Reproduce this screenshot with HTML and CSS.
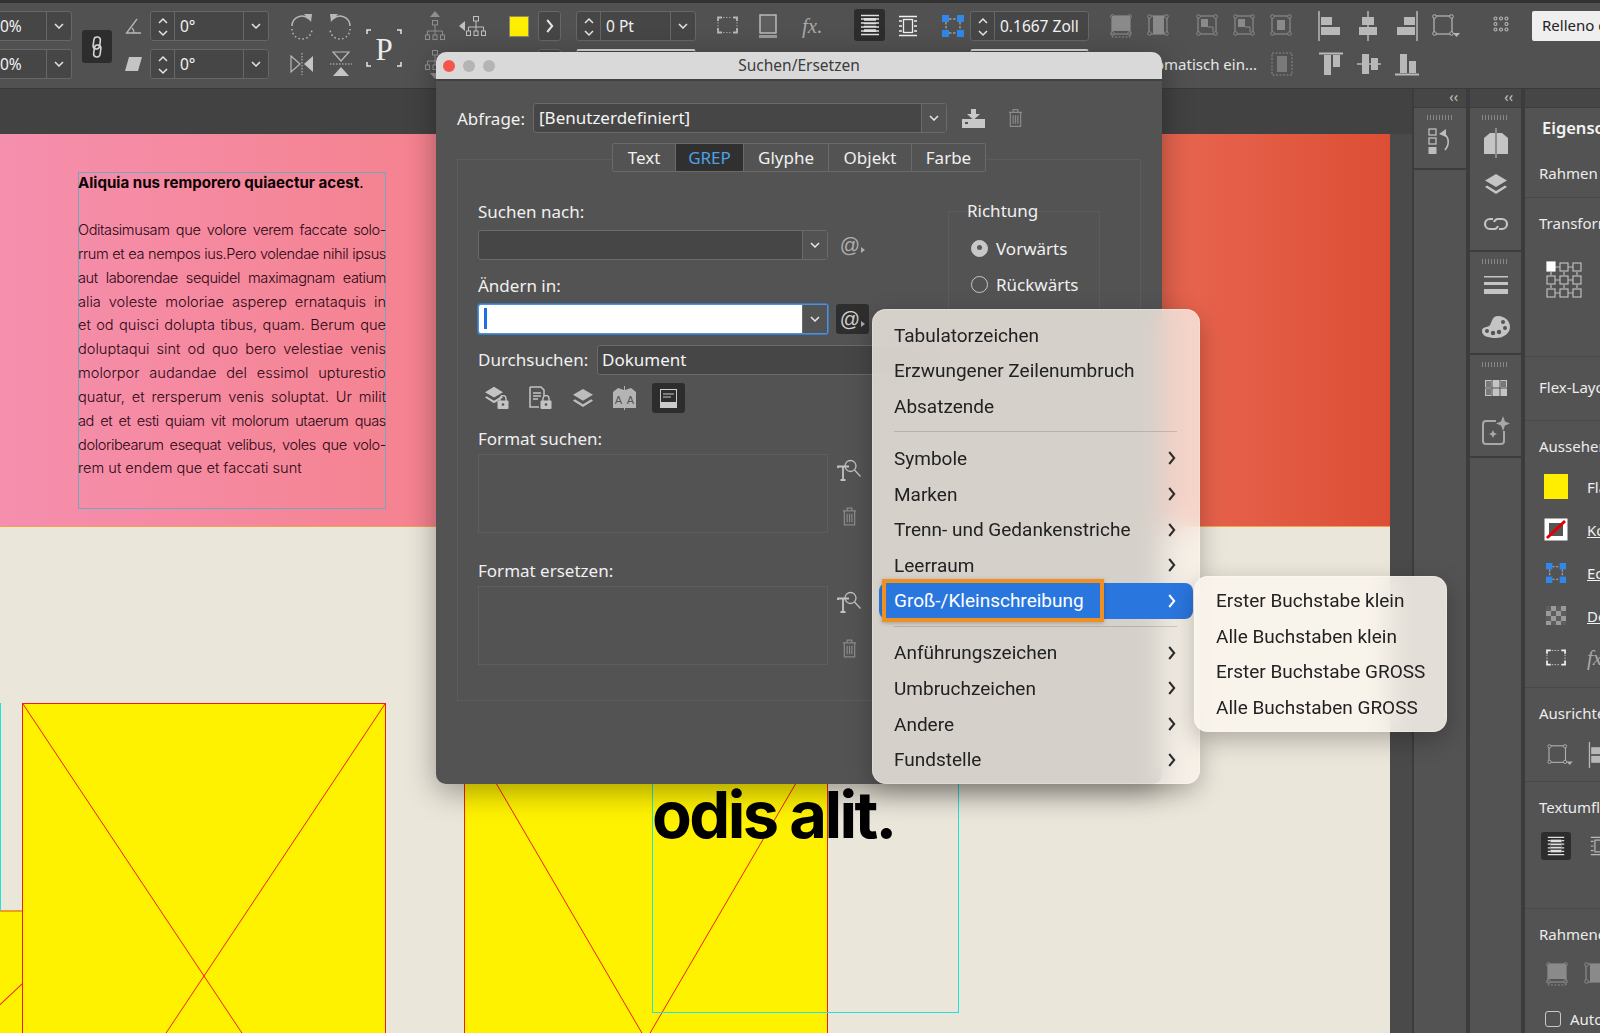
FILE: index.html
```html
<!DOCTYPE html>
<html lang="de">
<head>
    <meta charset="UTF-8">
    <title>Suchen/Ersetzen</title>
    <link rel="stylesheet" href="styles.css">
</head>
<body>
<svg class="sprite" width="0" height="0">
    <symbol id="i-chev" viewBox="0 0 10 6"><path d="M1 1l4 4 4-4" fill="none" stroke="currentColor" stroke-width="1.5"/></symbol>
    <symbol id="i-step" viewBox="0 0 12 30"><path d="M2 11l4-4 4 4M2 19l4 4 4-4" fill="none" stroke="currentColor" stroke-width="1.5"/></symbol>
    <symbol id="i-more" viewBox="0 0 8 14"><path d="M1.2 1l5 6-5 6" fill="none" stroke="currentColor" stroke-width="2"/></symbol>
    <symbol id="i-trash" viewBox="0 0 16 21"><path d="M1 4.5h14M5.5 4.5V1.5h5v3M2.5 4.5v15h11v-15M5.5 7.5v9M8 7.5v9M10.5 7.5v9" fill="none" stroke="currentColor" stroke-width="1.3"/></symbol>
    <symbol id="i-tsearch" viewBox="0 0 24 22"><path d="M1 9V7.500h11M6 8v13M3.500 21h5" fill="none" stroke="currentColor" stroke-width="1.800"/><circle cx="13.500" cy="7" r="5.500" fill="none" stroke="currentColor" stroke-width="1.300"/><path d="M17.500 11l6 6.500" stroke="currentColor" stroke-width="1.300"/></symbol>
    <symbol id="i-layers" viewBox="0 0 24 22"><path d="M12 1l11 6.500-11 6.500L1 7.500z" fill="currentColor"/><path d="M3 12.500l9 5.500 9-5.500 2 1.500-11 7-11-7z" fill="currentColor"/></symbol>
    <symbol id="i-lock" viewBox="0 0 12 14"><rect x="0.500" y="5.500" width="11" height="8.500" rx="1" fill="currentColor"/><path d="M3 6V3.500a3 3 0 0 1 6 0V6" fill="none" stroke="currentColor" stroke-width="1.400"/><circle cx="6" cy="9.500" r="1.300" fill="#535353"/></symbol>
    <symbol id="i-rot" viewBox="0 0 24 30"><path d="M2 15a10 10 0 0 1 17-7" fill="none" stroke="currentColor" stroke-width="1.500"/><path d="M14 3l8 0-1 8z" fill="currentColor"/><path d="M2 18a10 10 0 0 0 20 0" fill="none" stroke="currentColor" stroke-width="1.500" stroke-dasharray="1.500 2.500"/></symbol>
    <symbol id="i-tree" viewBox="0 0 22 22"><path d="M11 6v5M3.500 16v-4h15v4M11 11v5" fill="none" stroke="currentColor" stroke-width="1"/><rect x="8.500" y="1.500" width="5" height="4.500" fill="none" stroke="currentColor"/><rect x="1.500" y="16" width="4" height="4.500" fill="none" stroke="currentColor"/><rect x="9" y="16" width="4" height="4.500" fill="none" stroke="currentColor"/><rect x="16.500" y="16" width="4" height="4.500" fill="none" stroke="currentColor"/></symbol>
    <symbol id="i-wrap" viewBox="0 0 20 22"><path d="M1 1.500h18M1 20.500h18M1 5h3M16 5h3M1 9h3M16 9h3M1 13h3M16 13h3M1 17h3M16 17h3" stroke="currentColor" stroke-width="1.300"/><rect x="4" y="4" width="12" height="14" fill="currentColor"/><path d="M4 7.500h12M4 11h12M4 14.500h12" stroke="#2c2c2c" stroke-width="1.500"/></symbol>
    <symbol id="i-wrap2" viewBox="0 0 20 22"><path d="M1 1.500h18M1 20.500h18M1 6h3M16 6h3M1 11h3M16 11h3M1 16h3M16 16h3" stroke="currentColor" stroke-width="1.300"/><rect x="5.500" y="4.500" width="9" height="13" fill="none" stroke="currentColor" stroke-width="1.300"/></symbol>
    <symbol id="i-gap" viewBox="0 0 22 22"><path d="M7 4h8M7 18h8M4 7v8M18 7v8" stroke="#9a9a9a" stroke-width="1.500" stroke-dasharray="2.500 1.500"/><g fill="#2f88ea"><rect x="0" y="0" width="7" height="7"/><rect x="15" y="0" width="7" height="7"/><rect x="0" y="15" width="7" height="7"/><rect x="15" y="15" width="7" height="7"/></g></symbol>
    <symbol id="i-frame" viewBox="0 0 22 22"><rect x="2" y="2" width="18" height="18" fill="none" stroke="currentColor" stroke-width="1.200"/><g fill="#535353" stroke="currentColor"><circle cx="2.500" cy="2.500" r="1.800"/><circle cx="19.500" cy="2.500" r="1.800"/><circle cx="2.500" cy="19.500" r="1.800"/><circle cx="19.500" cy="19.500" r="1.800"/></g></symbol>
    <symbol id="i-corners" viewBox="0 0 22 20"><path d="M1 5V1.500h4M16 1.500h4V5M1 12v4.500h4M16 16.500h4V12" fill="none" stroke="currentColor" stroke-width="1.800"/><path d="M6 1.500h9M6 16.500h9M1 6v5M20 6v5" stroke="currentColor" stroke-dasharray="1.500 1.500" stroke-width=".8"/></symbol>
    <symbol id="i-fit-a" viewBox="0 0 22 24"><use href="#i-frame" width="22" height="22"/><rect x="2" y="2" width="18" height="15" fill="currentColor"/><path d="M2 19v4h18v-4" fill="none" stroke="currentColor" stroke-dasharray="2 1.500"/></symbol>
    <symbol id="i-fit-b" viewBox="0 0 22 24"><use href="#i-frame" width="22" height="22"/><rect x="6" y="2" width="11" height="18" fill="currentColor"/></symbol>
    <symbol id="i-fit-c" viewBox="0 0 22 24"><use href="#i-frame" width="22" height="22"/><rect x="5" y="5" width="7" height="8" fill="currentColor"/><path d="M12 13h5v5" fill="none" stroke="currentColor"/></symbol>
    <symbol id="i-fit-d" viewBox="0 0 22 24"><use href="#i-frame" width="22" height="22"/><rect x="7" y="6" width="8" height="10" fill="currentColor"/></symbol>
    <symbol id="i-al-l" viewBox="0 0 24 30"><path d="M1 0v30" stroke="currentColor" stroke-width="1.500"/><rect x="3" y="6" width="11" height="8" fill="currentColor"/><rect x="3" y="16" width="19" height="8" fill="currentColor"/></symbol>
    <symbol id="i-al-c" viewBox="0 0 24 30"><path d="M12 0v30" stroke="currentColor" stroke-width="1.500"/><rect x="6" y="6" width="12" height="8" fill="currentColor"/><rect x="3" y="16" width="18" height="8" fill="currentColor"/></symbol>
    <symbol id="i-al-r" viewBox="0 0 24 30"><path d="M23 0v30" stroke="currentColor" stroke-width="1.500"/><rect x="10" y="6" width="11" height="8" fill="currentColor"/><rect x="3" y="16" width="18" height="8" fill="currentColor"/></symbol>
    <symbol id="i-al-t" viewBox="0 0 26 24"><path d="M1 1.500h24" stroke="currentColor" stroke-width="2"/><rect x="6" y="3" width="7" height="20" fill="currentColor"/><rect x="15" y="3" width="7" height="12" fill="currentColor"/></symbol>
    <symbol id="i-al-m" viewBox="0 0 26 24"><path d="M1 12h24" stroke="currentColor" stroke-width="1.500"/><rect x="6" y="2" width="7" height="20" fill="currentColor"/><rect x="15" y="6" width="7" height="12" fill="currentColor"/></symbol>
    <symbol id="i-al-b" viewBox="0 0 26 24"><path d="M1 22.500h24" stroke="currentColor" stroke-width="2"/><rect x="6" y="2" width="7" height="19" fill="currentColor"/><rect x="15" y="9" width="7" height="12" fill="currentColor"/></symbol>
</svg>

<header class="toolbar">
    <div class="tb-group g-zoom">
        <div class="num num-cut"><span class="num-val">0%</span><span class="num-chev"><svg width="10" height="6"><use href="#i-chev"/></svg></span></div>
        <div class="num num-cut"><span class="num-val">0%</span><span class="num-chev"><svg width="10" height="6"><use href="#i-chev"/></svg></span></div>
    </div>
    <div class="tb-group g-link">
        <div class="icon-btn link-btn"><svg width="14" height="24" viewBox="0 0 14 24" fill="none" stroke="#d4d4d4" stroke-width="1.600"><rect x="3.500" y="2" width="6.500" height="12" rx="3.200" transform="rotate(8 7 8)"/><rect x="4" y="10" width="6.500" height="12" rx="3.200" transform="rotate(8 7 16)"/></svg></div>
    </div>
    <div class="tb-group g-angle">
        <div class="tb-ico"><svg width="17" height="18" viewBox="0 0 17 18" fill="none" stroke="#b8b8b8" stroke-width="1.300"><path d="M16 16H1.500L12 2M9 16a7 7 0 0 0-2-5"/></svg></div>
        <div class="tb-ico"><svg width="17" height="14" viewBox="0 0 17 14"><path d="M4 0h13l-4 14H0z" fill="#c4c4c4"/></svg></div>
    </div>
    <div class="tb-group g-num">
        <div class="num"><span class="num-step"><svg width="12" height="30"><use href="#i-step"/></svg></span><span class="num-val">0°</span><span class="num-chev"><svg width="10" height="6"><use href="#i-chev"/></svg></span></div>
        <div class="num"><span class="num-step"><svg width="12" height="30"><use href="#i-step"/></svg></span><span class="num-val">0°</span><span class="num-chev"><svg width="10" height="6"><use href="#i-chev"/></svg></span></div>
    </div>
    <div class="tb-group g-rotate">
        <div class="tb-row">
            <svg width="24" height="30"><use href="#i-rot"/></svg>
            <svg class="flip-x" width="24" height="30"><use href="#i-rot"/></svg>
        </div>
        <div class="tb-row">
            <svg width="24" height="22" viewBox="0 0 24 22"><path d="M1 3l9 8-9 8z" fill="none" stroke="#b8b8b8" stroke-width="1.200"/><path d="M23 3l-9 8 9 8z" fill="#c4c4c4"/><path d="M12 0v22" stroke="#c4c4c4" stroke-dasharray="1.500 1.500"/></svg>
            <svg width="22" height="26" viewBox="0 0 22 26"><path d="M3 1h16l-8 9z" fill="none" stroke="#b8b8b8" stroke-width="1.200"/><path d="M3 25h16l-8-9z" fill="#c4c4c4"/><path d="M0 13h22" stroke="#c4c4c4" stroke-dasharray="1.500 1.500"/></svg>
        </div>
    </div>
    <div class="tb-group g-p">
        <svg width="36" height="38" viewBox="0 0 36 38">
            <path d="M1 5V1h4M31 1h4v4M1 33v4h4M31 37h4v-4" fill="none" stroke="#e4e4e4" stroke-width="1.500"/>
            <text class="p-glyph" x="18" y="31" text-anchor="middle">P</text>
        </svg>
    </div>
    <div class="tb-group g-tree">
        <div class="tb-row">
            <svg width="22" height="30" viewBox="0 0 22 30"><path d="M11 0l5 6H6z" fill="#8f8f8f"/><use href="#i-tree" y="8" width="22" height="22" color="#8f8f8f"/></svg>
            <svg width="28" height="22" viewBox="0 0 28 22"><path d="M0 11l6-5v10z" fill="#c0c0c0"/><use href="#i-tree" x="6" width="22" height="22" color="#c0c0c0"/></svg>
        </div>
        <div class="tb-row">
            <svg width="22" height="30" viewBox="0 0 22 30"><use href="#i-tree" width="22" height="22" color="#8f8f8f"/><path d="M11 30l5-6H6z" fill="#8f8f8f"/></svg>
        </div>
    </div>
    <div class="tb-group g-swatch">
        <div class="tb-ico"><span class="swatch"></span></div>
    </div>
    <div class="tb-group g-arrow">
        <div class="arrow-btn"><svg width="8" height="14"><use href="#i-more"/></svg></div>
        <div class="arrow-btn"></div>
    </div>
    <div class="tb-group g-stroke">
        <div class="num"><span class="num-step"><svg width="12" height="30"><use href="#i-step"/></svg></span><span class="num-val">0 Pt</span><span class="num-chev"><svg width="10" height="6"><use href="#i-chev"/></svg></span></div>
        <div class="num num-light"></div>
    </div>
    <div class="tb-group g-strokeico">
        <div class="tb-row">
            <svg width="22" height="20"><use href="#i-corners"/></svg>
            <svg width="18" height="24" viewBox="0 0 18 24"><rect x="1" y="1" width="16" height="18" fill="#5e5e5e" stroke="#c0c0c0" stroke-width="1.400"/><rect x="0" y="21" width="18" height="3" fill="#9a9a9a"/></svg>
        </div>
    </div>
    <div class="tb-group g-fx">
        <div class="tb-row"><span class="fx">fx.</span></div>
    </div>
    <div class="tb-group g-wrapbtn">
        <div class="icon-btn wrap-btn"><svg width="20" height="22"><use href="#i-wrap"/></svg></div>
    </div>
    <div class="tb-group g-wrap2">
        <div class="tb-ico"><svg width="20" height="22"><use href="#i-wrap2"/></svg></div>
    </div>
    <div class="tb-group g-gap">
        <div class="tb-ico"><svg width="22" height="22"><use href="#i-gap"/></svg></div>
    </div>
    <div class="tb-group g-gapnum">
        <div class="num"><span class="num-step"><svg width="12" height="30"><use href="#i-step"/></svg></span><span class="num-val">0.1667 Zoll</span></div>
        <div class="num num-light"></div>
    </div>
    <div class="tb-group g-fit">
        <div class="tb-row dim">
            <svg width="22" height="24"><use href="#i-fit-a"/></svg>
            <svg class="push-1" width="22" height="24"><use href="#i-fit-b"/></svg>
            <svg class="push-2" width="22" height="24"><use href="#i-fit-c"/></svg>
            <svg class="push-3" width="22" height="24"><use href="#i-fit-c"/></svg>
            <svg class="push-3" width="22" height="24"><use href="#i-fit-d"/></svg>
        </div>
        <div class="tb-row row-end">
            <span class="tb-text">Automatisch ein...</span>
            <svg class="dim push-4" width="22" height="24" viewBox="0 0 22 24"><rect x="1" y="1" width="20" height="22" fill="none" stroke="#8a8a8a" stroke-dasharray="2 1.500"/><rect x="6" y="4" width="10" height="16" fill="#7a7a7a"/></svg>
        </div>
    </div>
    <div class="tb-group g-align">
        <div class="tb-row">
            <svg width="24" height="30"><use href="#i-al-l"/></svg>
            <svg class="push-al" width="24" height="30"><use href="#i-al-c"/></svg>
            <svg class="push-al" width="24" height="30"><use href="#i-al-r"/></svg>
            <svg class="push-al" width="28" height="24" viewBox="0 0 28 24"><use href="#i-frame" width="22" height="22" color="#b8b8b8"/><path d="M21 19h7l-3.500 4z" fill="#b8b8b8"/></svg>
        </div>
        <div class="tb-row">
            <svg width="26" height="24"><use href="#i-al-t"/></svg>
            <svg class="push-al2" width="26" height="24"><use href="#i-al-m"/></svg>
            <svg class="push-al2" width="26" height="24"><use href="#i-al-b"/></svg>
        </div>
    </div>
    <div class="tb-group g-grid">
        <div class="tb-ico"><svg width="16" height="20" viewBox="0 0 16 20" fill="none" stroke="#b8b8b8" stroke-width="1.100"><circle cx="2.500" cy="2.500" r="1.500"/><circle cx="8" cy="2.500" r="1.500"/><circle cx="13.500" cy="2.500" r="1.500"/><circle cx="2.500" cy="8" r="1.500"/><circle cx="13.500" cy="8" r="1.500"/><circle cx="2.500" cy="13.500" r="1.500"/><circle cx="8" cy="13.500" r="1.500"/><circle cx="13.500" cy="13.500" r="1.500"/></svg></div>
    </div>
    <div class="tb-group g-relleno">
        <div class="style-box">Relleno de grafico</div>
    </div>
</header>

<div class="workspace">
    <main class="canvas">
        <div class="page">
            <section class="spread-top"></section>
            <section class="spread-bottom"></section>

            <div class="guide-left"></div>
            <div class="frame frame-back"><svg class="frame-x" viewBox="0 0 22 150" preserveAspectRatio="none"><path d="M22 72L0 94"/></svg></div>
            <div class="frame frame-one"><svg class="frame-x" viewBox="0 0 100 100" preserveAspectRatio="none"><path d="M0 0L100 100M100 0L0 100"/></svg></div>
            <div class="frame frame-two"><svg class="frame-x" viewBox="0 0 100 100" preserveAspectRatio="none"><path d="M0 0L100 100M100 0L0 100"/></svg></div>
            <div class="text-cyan"></div>
            <div class="headline">odis alit.</div>

            <div class="text-frame">
                <p class="lead"><b>Aliquia nus remporero quiaectur acest</b>.</p>
                <p class="copy">
                    <span class="tight">Oditasimusam que volore verem faccate solo-</span>
                    <span class="tight">rrum et ea nempos ius.Pero volendae nihil ipsus</span>
                    <span class="tight">aut laborendae sequidel maximagnam eatium</span>
                    <span>alia voleste moloriae asperep ernataquis in</span>
                    <span>et od quisci dolupta tibus, quam. Berum que</span>
                    <span>doluptaqui sint od quo bero velestiae venis</span>
                    <span>molorpor audandae del essimol upturestio</span>
                    <span>quatur, et rersperum venis soluptat. Ur milit</span>
                    <span class="tight">ad et et esti quiam vit molorum utaerum quas</span>
                    <span class="tight">doloribearum esequat velibus, voles que volo-</span>
                    <span class="last">rem ut endem que et faccati sunt</span>
                </p>
            </div>
        </div>
    </main>

    <aside class="dock dock-a">
        <div class="dock-head"><span>‹‹</span></div>
        <div class="dock-sec sec-history">
            <i class="grip"></i>
            <svg width="24" height="26" viewBox="0 0 24 26" color="#bdbdbd"><g fill="none" stroke="currentColor" stroke-width="1.300"><rect x="1" y="1" width="7" height="6"/><rect x="1" y="10" width="7" height="6"/></g><rect x="0.500" y="19" width="8" height="7" fill="currentColor"/><path d="M15 6c6 2 7 10 2 16" fill="none" stroke="currentColor" stroke-width="1.600"/><path d="M11 6l7-5 0 8z" fill="currentColor"/></svg>
        </div>
    </aside>

    <aside class="dock dock-b">
        <div class="dock-head"><span>‹‹</span></div>
        <div class="dock-sec sec-one">
            <i class="grip"></i>
            <svg width="26" height="30" viewBox="0 0 26 30" fill="#c4c4c4"><path d="M12 5H7L1 10v16h11zM14 5h5l6 5v16H14z"/><path d="M13 0v30" stroke="#c4c4c4" stroke-width="1"/></svg>
            <svg class="layers-ico" width="24" height="26" viewBox="0 0 24 22" color="#c4c4c4"><use href="#i-layers"/></svg>
            <svg class="chain-ico" width="26" height="14" viewBox="0 0 26 14" fill="none" stroke="#c4c4c4" stroke-width="2.200"><path d="M10 2H7a5 5 0 0 0 0 10h5a5 5 0 0 0 3-3"/><path d="M16 12h3a5 5 0 0 0 0-10h-5a5 5 0 0 0-3 3"/></svg>
        </div>
        <div class="dock-sec sec-two">
            <i class="grip"></i>
            <svg width="24" height="18" viewBox="0 0 24 18" fill="#c4c4c4"><rect y="0" width="24" height="1.500"/><rect y="6" width="24" height="3"/><rect y="13" width="24" height="5"/></svg>
            <svg class="palette-ico" width="28" height="22" viewBox="0 0 28 22"><path d="M16 0c7 0 12 5 12 11s-6 11-14 11S0 20 0 15s6-3 8-6 2-9 8-9z" fill="#c4c4c4"/><g fill="#535353"><circle cx="21" cy="6" r="2"/><circle cx="23" cy="12" r="2"/><circle cx="17" cy="16" r="2.200"/><circle cx="11" cy="17" r="2.200"/><circle cx="5" cy="15" r="2"/></g></svg>
        </div>
        <div class="dock-sec sec-three">
            <i class="grip"></i>
            <svg width="22" height="16" viewBox="0 0 22 16"><rect width="22" height="16" fill="#c4c4c4"/><path d="M7 0v16M15 0v16M0 8h22" stroke="#535353"/><rect x="1" y="1" width="5" height="6" fill="#777"/><rect x="1" y="9" width="5" height="6" fill="#777"/><rect x="16" y="1" width="5" height="6" fill="#777"/></svg>
            <svg class="fx-ico" width="28" height="30" viewBox="0 0 28 30"><path d="M14 6H4a3 3 0 0 0-3 3v17a3 3 0 0 0 3 3h15a3 3 0 0 0 3-3V16" fill="none" stroke="#a8a8a8" stroke-width="2"/><path d="M21 1l2 5.500 5 2-5 2-2 5.500-2-5.500-5-2 5-2zM11 15l1.300 2.700 2.700 1.300-2.700 1.300-1.300 2.700-1.300-2.700-2.700-1.300 2.700-1.300z" fill="#a8a8a8"/></svg>
        </div>
    </aside>

    <aside class="props">
        <div class="dock-head"></div>
        <section class="prop prop-main">
            <h2>Eigenschaften</h2>
            <div class="prop-title title-frame">Rahmen</div>
        </section>
        <section class="prop prop-transform">
            <div class="prop-title">Transformieren</div>
            <svg class="ref-grid" width="36" height="38" viewBox="0 0 36 38" fill="none" stroke="#bdbdbd" stroke-width="1.200">
                <path d="M9 6h5M22 6h5M9 19h5M22 19h5M9 32h5M22 32h5M5 11v3M18 11v3M31 11v3M5 24v3M18 24v3M31 24v3"/>
                <rect x="1" y="1" width="8" height="9" fill="#fff" stroke="#fff"/><rect x="14" y="2" width="8" height="8"/><rect x="27" y="2" width="8" height="8"/>
                <rect x="1" y="15" width="8" height="8"/><rect x="14" y="15" width="8" height="8"/><rect x="27" y="15" width="8" height="8"/>
                <rect x="1" y="28" width="8" height="8"/><rect x="14" y="28" width="8" height="8"/><rect x="27" y="28" width="8" height="8"/>
            </svg>
        </section>
        <section class="prop prop-flex"><div class="prop-title">Flex-Layout</div></section>
        <section class="prop prop-look">
            <div class="prop-title">Aussehen</div>
            <div class="look-row"><span class="look-ico"><span class="look-fill"></span></span><span class="look-text">Fläche</span></div>
            <div class="look-row"><span class="look-ico"><svg width="24" height="23" viewBox="0 0 24 23"><rect x="0.500" y="0.500" width="23" height="22" fill="#fff"/><rect x="5" y="5" width="14" height="13" fill="#555"/><path d="M3 20L21 3" stroke="#e00000" stroke-width="3"/></svg></span><span class="look-text ul">Kontur</span></div>
            <div class="look-row"><span class="look-ico"><svg width="20" height="20"><use href="#i-gap"/></svg></span><span class="look-text ul">Ecken</span></div>
            <div class="look-row"><span class="look-ico"><svg width="20" height="19" viewBox="0 0 20 19"><rect width="20" height="19" fill="#9a9a9a"/><path d="M0 0h5v5H0zM10 0h5v5h-5zM5 5h5v5H5zM15 5h5v5h-5zM0 10h5v5H0zM10 10h5v5h-5zM5 15h5v4H5zM15 15h5v4h-5z" fill="#5d5d5d"/></svg></span><span class="look-text ul">Deckkraft</span></div>
            <div class="look-row"><span class="look-ico corners-ico"><svg width="21" height="19"><use href="#i-corners"/></svg></span><span class="fx">fx</span></div>
        </section>
        <section class="prop prop-align">
            <div class="prop-title">Ausrichten</div>
            <div class="prop-icons">
                <svg width="28" height="22" viewBox="0 0 28 24"><use href="#i-frame" width="22" height="22" color="#b0b0b0"/><path d="M21 19h7l-3.500 4z" fill="#b0b0b0"/></svg>
                <svg class="align-first" width="22" height="26"><use href="#i-al-l" color="#b8b8b8"/></svg>
            </div>
        </section>
        <section class="prop prop-wrap">
            <div class="prop-title">Textumfluss</div>
            <div class="prop-icons">
                <span class="icon-btn panel-wrap"><svg width="20" height="20"><use href="#i-wrap"/></svg></span>
                <svg class="wrap-second" width="22" height="20"><use href="#i-wrap2" color="#b8b8b8"/></svg>
            </div>
        </section>
        <section class="prop prop-fit">
            <div class="prop-title">Rahmeneinpassung</div>
            <div class="prop-icons dim">
                <svg width="22" height="24"><use href="#i-fit-a"/></svg>
                <svg class="fit-second" width="22" height="24"><use href="#i-fit-b"/></svg>
            </div>
            <label class="auto"><i class="check"></i>Automatisch</label>
        </section>
    </aside>
</div>

<!-- Suchen/Ersetzen dialog -->
<div class="dialog">
    <div class="title-bar">
        <span class="light red"></span><span class="light"></span><span class="light"></span>
        <span class="title">Suchen/Ersetzen</span>
    </div>
    <div class="dialog-body">
        <div class="query">
            <label class="query-label">Abfrage:</label>
            <div class="combo combo-query"><span class="combo-val">[Benutzerdefiniert]</span><span class="combo-btn"><svg width="10" height="6"><use href="#i-chev"/></svg></span></div>
            <svg class="save" width="23" height="19" viewBox="0 0 23 19"><path d="M9 0h5v5h4l-6.500 6L5 5h4z" fill="#c8c8c8"/><rect x="0" y="10" width="23" height="9" fill="#c8c8c8"/><rect x="3" y="13" width="3" height="2" fill="#535353"/></svg>
            <svg class="query-trash" width="15" height="20"><use href="#i-trash"/></svg>
        </div>
        <nav class="tabs">
            <span class="tab tab-text">Text</span>
            <span class="tab tab-grep active">GREP</span>
            <span class="tab tab-glyph">Glyphe</span>
            <span class="tab tab-obj">Objekt</span>
            <span class="tab tab-color">Farbe</span>
        </nav>
        <div class="group">
            <div class="group-left">
                <div class="field-label">Suchen nach:</div>
                <div class="field-row">
                    <div class="combo combo-field"><span class="combo-val"></span><span class="combo-btn"><svg width="10" height="6"><use href="#i-chev"/></svg></span></div>
                    <span class="at">@</span>
                </div>
                <div class="field-label label-change">Ändern in:</div>
                <div class="field-row">
                    <div class="combo combo-field focus"><span class="combo-val"><i class="caret"></i></span><span class="combo-btn"><svg width="10" height="6"><use href="#i-chev"/></svg></span></div>
                    <span class="at at-on">@</span>
                </div>
                <div class="scope">
                    <label class="field-label">Durchsuchen:</label>
                    <div class="combo combo-scope"><span class="combo-val">Dokument</span></div>
                </div>
                <div class="scope-icons">
                    <span class="scope-ico ico-a"><svg width="25" height="24" viewBox="0 0 25 24" color="#c4c4c4"><use href="#i-layers" width="20" height="18"/><use href="#i-lock" x="13" y="9" width="12" height="14"/></svg></span>
                    <span class="scope-ico ico-b"><svg width="23" height="24" viewBox="0 0 23 24"><path d="M1 1h11l3 3v6M10 21H1V1" fill="none" stroke="#c4c4c4" stroke-width="1.500"/><path d="M4 7h8M4 10h8M4 13h5" stroke="#c4c4c4" stroke-width="1.500"/><use href="#i-lock" x="11" y="9" width="12" height="14" color="#c4c4c4"/></svg></span>
                    <span class="scope-ico ico-c"><svg width="22" height="20" viewBox="0 0 24 22" color="#bdbdbd"><use href="#i-layers"/></svg></span>
                    <span class="scope-ico ico-d"><svg width="25" height="24" viewBox="0 0 25 24"><path d="M12 4L6 2 1 6v16h11zM13 4l6-2 5 4v16H13z" fill="#b4b4b4"/><path d="M12.500 0v24" stroke="#b4b4b4"/><text class="aa" x="6.500" y="18" text-anchor="middle">A</text><text class="aa" x="18.500" y="18" text-anchor="middle">A</text></svg></span>
                    <span class="icon-btn scope-btn"><svg width="17" height="19" viewBox="0 0 17 19"><rect x="0.500" y="0.500" width="16" height="18" fill="none" stroke="#ccc"/><path d="M3 5h11M3 8h8" stroke="#ccc" stroke-width="1.200"/><rect x="1" y="13" width="15" height="5" fill="#ccc"/></svg></span>
                </div>
                <div class="field-label label-fmt1">Format suchen:</div>
                <div class="fmt-row">
                    <div class="fmt-box"></div>
                    <div class="fmt-tools">
                        <svg width="24" height="22"><use href="#i-tsearch"/></svg>
                        <svg class="fmt-trash" width="15" height="21"><use href="#i-trash"/></svg>
                    </div>
                </div>
                <div class="field-label label-fmt2">Format ersetzen:</div>
                <div class="fmt-row">
                    <div class="fmt-box"></div>
                    <div class="fmt-tools">
                        <svg width="24" height="22"><use href="#i-tsearch"/></svg>
                        <svg class="fmt-trash" width="15" height="21"><use href="#i-trash"/></svg>
                    </div>
                </div>
            </div>
            <fieldset class="direction">
                <legend>Richtung</legend>
                <div class="radio on"><i></i>Vorwärts</div>
                <div class="radio"><i></i>Rückwärts</div>
            </fieldset>
        </div>
    </div>
</div>

<!-- context menu with sub menu -->
<div class="menu main-menu">
    <div class="mi"><span>Tabulatorzeichen</span></div>
    <div class="mi"><span>Erzwungener Zeilenumbruch</span></div>
    <div class="mi"><span>Absatzende</span></div>
    <div class="msep"></div>
    <div class="mi"><span>Symbole</span><svg width="8" height="14"><use href="#i-more"/></svg></div>
    <div class="mi"><span>Marken</span><svg width="8" height="14"><use href="#i-more"/></svg></div>
    <div class="mi"><span>Trenn- und Gedankenstriche</span><svg width="8" height="14"><use href="#i-more"/></svg></div>
    <div class="mi"><span>Leerraum</span><svg width="8" height="14"><use href="#i-more"/></svg></div>
    <div class="mi selected"><span>Groß-/Kleinschreibung</span><svg width="8" height="14"><use href="#i-more"/></svg><i class="callout"></i></div>
    <div class="msep"></div>
    <div class="mi"><span>Anführungszeichen</span><svg width="8" height="14"><use href="#i-more"/></svg></div>
    <div class="mi"><span>Umbruchzeichen</span><svg width="8" height="14"><use href="#i-more"/></svg></div>
    <div class="mi"><span>Andere</span><svg width="8" height="14"><use href="#i-more"/></svg></div>
    <div class="mi"><span>Fundstelle</span><svg width="8" height="14"><use href="#i-more"/></svg></div>
</div>
<div class="menu sub-menu">
    <div class="mi"><span>Erster Buchstabe klein</span></div>
    <div class="mi"><span>Alle Buchstaben klein</span></div>
    <div class="mi"><span>Erster Buchstabe GROSS</span></div>
    <div class="mi"><span>Alle Buchstaben GROSS</span></div>
</div>
</body>
</html>
```
FILE: styles.css
```css
* {
    box-sizing: border-box;
}
html, body {
    margin: 0;
    padding: 0;
}
body {
    position: relative;
    width: 1600px;
    height: 1033px;
    overflow: hidden;
    background-color: #535353;
    border-top: 3px solid #323232;
    font-family: "Noto Sans", Arial, sans-serif;
    color: #f0f0f0;
}
.sprite {
    position: absolute;
}
svg {
    flex: none;
    display: block;
}

/* top control bar */
.toolbar {
    display: flex;
    height: 86px;
    padding-top: 8px;
    background-color: #515151;
    border-bottom: 1px solid #3a3a3a;
    overflow: hidden;
}
.tb-group {
    display: flex;
    flex: none;
    flex-direction: column;
    gap: 8px;
}
.tb-row {
    display: flex;
    align-items: center;
    height: 30px;
    color: #b8b8b8;
}
.tb-ico {
    display: flex;
    align-items: center;
    justify-content: center;
    height: 30px;
}
.row-end {
    justify-content: flex-end;
}
.dim {
    color: #8a8a8a;
}
.flip-x {
    transform: scaleX(-1);
}

.g-zoom { width: 72px; }
.g-link { margin-left: 10px; width: 30px; justify-content: center; height: 70px; }
.g-angle { margin-left: 13px; width: 17px; }
.g-num { margin-left: 8px; width: 119px; }
.g-rotate { margin-left: 21px; width: 62px; }
.g-rotate .tb-row { justify-content: space-between; }
.g-p { margin-left: 14px; padding-top: 18px; }
.g-tree { margin-left: 22px; width: 63px; }
.g-tree .tb-row { justify-content: space-between; }
.g-swatch { margin-left: 22px; width: 20px; }
.g-arrow { margin-left: 9px; width: 23px; }
.g-stroke { margin-left: 15px; width: 120px; }
.g-strokeico { margin-left: 21px; width: 60px; }
.g-strokeico .tb-row { justify-content: space-between; }
.g-fx { margin-left: 25px; width: 18px; }
.g-wrapbtn { margin-left: 34px; width: 31px; }
.g-wrap2 { margin-left: 13px; width: 20px; }
.g-gap { margin-left: 24px; width: 22px; }
.g-gapnum { margin-left: 6px; width: 119px; }
.g-fit { margin-left: 21px; width: 183px; }
.g-align { margin-left: 25px; width: 143px; }
.g-grid { margin-left: 32px; width: 16px; }
.g-relleno { margin-left: 23px; }

.push-1 { margin-left: 15px; }
.push-2 { margin-left: 27px; }
.push-3 { margin-left: 15px; }
.push-4 { margin-left: 14px; }
.push-al { margin-left: 14px; }
.push-al2 { margin-left: 12px; }

.num {
    display: flex;
    align-items: center;
    height: 30px;
    background-color: #464646;
    border: 1px solid #676767;
    border-radius: 3px;
    font-size: 15.5px;
    color: #f2f2f2;
}
.num-cut {
    border-left: none;
    border-radius: 0 3px 3px 0;
}
.num-step {
    display: flex;
    justify-content: center;
    width: 24px;
    height: 100%;
    border-right: 1px solid #676767;
    color: #e4e4e4;
}
.num-val {
    flex: 1;
    padding-left: 5px;
    white-space: nowrap;
}
.num-cut .num-val {
    padding-left: 0;
}
.num-chev {
    display: flex;
    align-items: center;
    justify-content: center;
    width: 25px;
    height: 100%;
    border-left: 1px solid #676767;
    color: #e4e4e4;
}
.num-light {
    border-top: 2px solid #d6d6d6;
}
.icon-btn {
    display: flex;
    align-items: center;
    justify-content: center;
    background-color: #2d2d2d;
    border-radius: 3px;
}
.link-btn {
    width: 30px;
    height: 33px;
    margin-top: 1px;
}
.wrap-btn {
    width: 31px;
    height: 32px;
    margin-top: -2px;
    color: #e0e0e0;
}
.p-glyph {
    font-family: "Liberation Serif", serif;
    font-size: 31px;
    fill: #ececec;
}
.swatch {
    width: 20px;
    height: 21px;
    background-color: #ffee00;
    border: 1px solid #8a8a6a;
}
.arrow-btn {
    display: flex;
    align-items: center;
    justify-content: center;
    height: 30px;
    border: 1px solid #676767;
    border-radius: 3px;
    background-color: #464646;
    color: #e4e4e4;
}
.fx {
    font-family: "Liberation Serif", serif;
    font-style: italic;
    font-size: 21px;
    color: #a8a8a8;
}
.tb-text {
    font-size: 15px;
    color: #e8e8e8;
    white-space: nowrap;
}
.style-box {
    width: 80px;
    height: 30px;
    padding: 4px 0 0 10px;
    background-color: #efefef;
    border-radius: 2px;
    font-size: 15px;
    color: #222;
    white-space: nowrap;
    overflow: hidden;
}

/* canvas and docks */
.workspace {
    display: flex;
    height: 944px;
}
.canvas {
    position: relative;
    width: 1412px;
    background-color: #4a4a4a;
    padding-top: 45px;
    overflow: hidden;
}
.canvas::before {
    content: "";
    position: absolute;
    left: 0;
    top: 0;
    width: 100%;
    height: 45px;
    background-color: #424242;
}
.page {
    position: relative;
    display: flex;
    flex-direction: column;
    width: 1390px;
    height: 899px;
}
.spread-top {
    height: 393px;
    border-bottom: 1px solid #f2a24c;
    background: linear-gradient(90deg, #f58fae 0, #f5828e 440px, #e86650 1162px, #dd4e35 100%);
}
.spread-bottom {
    flex: 1;
    background-color: #ebe6da;
}
.frame {
    position: absolute;
    background-color: #fff200;
    border: 1px solid #f01c1c;
}
.frame-x {
    position: absolute;
    inset: 0;
    width: 100%;
    height: 100%;
}
.frame-x path {
    fill: none;
    stroke: #f01c1c;
    stroke-width: 1px;
    vector-effect: non-scaling-stroke;
}
.frame-back {
    left: 0;
    top: 776px;
    width: 23px;
    height: 150px;
    border-width: 2px 0 0;
    border-color: #e8a020;
}
.frame-one {
    left: 22px;
    top: 569px;
    width: 364px;
    height: 546px;
}
.frame-two {
    left: 464px;
    top: 595px;
    width: 364px;
    height: 622px;
}
.guide-left {
    position: absolute;
    left: 0;
    top: 569px;
    width: 1px;
    height: 330px;
    background-color: #22e0e0;
}
.text-cyan {
    position: absolute;
    left: 652px;
    top: 600px;
    width: 307px;
    height: 279px;
    border: 1px solid #22e0e0;
}
.headline {
    position: absolute;
    left: 652px;
    top: 646px;
    font-family: Inter, Arial, sans-serif;
    font-size: 65px;
    font-weight: 700;
    line-height: 70px;
    color: #000;
    letter-spacing: -2.6px;
    white-space: nowrap;
}
.text-frame {
    position: absolute;
    left: 78px;
    top: 38px;
    width: 308px;
    height: 337px;
    border: 1px solid #74a6bd;
    font-family: Inter, Arial, sans-serif;
    color: #2c0714;
}
.lead {
    margin: 0 0 0 -1px;
    height: 22px;
    font-size: 15.1px;
    line-height: 19px;
    color: #0c0205;
    white-space: nowrap;
}
.copy {
    margin: 24px -1px 0;
    font-size: 14.6px;
    font-weight: 300;
    line-height: 23.85px;
}
.copy span {
    display: block;
    text-align: justify;
    text-align-last: justify;
}
.copy .tight {
    letter-spacing: -0.4px;
    word-spacing: -1px;
}
.copy .last {
    text-align-last: left;
}

.dock {
    background-color: #535353;
}
.dock-a {
    width: 56px;
    border-left: 2px solid #3c3c3c;
    border-right: 2px solid #3c3c3c;
}
.dock-b {
    width: 53px;
    border-left: 2px solid #3c3c3c;
}
.dock-head {
    height: 19px;
    background-color: #464646;
    border-bottom: 1px solid #3c3c3c;
    text-align: right;
    padding-right: 8px;
    font-size: 14px;
    line-height: 16px;
    color: #c4c4c4;
}
.dock-sec {
    display: flex;
    flex-direction: column;
    align-items: center;
    border-bottom: 2px solid #3c3c3c;
    padding-top: 7px;
}
.grip {
    display: block;
    width: 27px;
    height: 5px;
    margin-bottom: 8px;
    background: repeating-linear-gradient(90deg, #888 0 1px, transparent 1px 3px);
}
.sec-history { height: 62px; }
.sec-one { height: 144px; }
.sec-two { height: 103px; }
.sec-three { height: 103px; }
.layers-ico { margin-top: 13px; }
.chain-ico { margin-top: 20px; }
.sec-two .grip { margin-bottom: 12px; }
.palette-ico { margin-top: 22px; }
.sec-three .grip { margin-bottom: 13px; }
.fx-ico { margin-top: 19px; }

.props {
    flex: 1;
    min-width: 0;
    border-left: 4px solid #3c3c3c;
    overflow: hidden;
    white-space: nowrap;
}
.prop {
    padding-left: 14px;
    border-bottom: 1px solid #484848;
}
.prop h2 {
    margin: 0;
    padding: 9px 0 0 3px;
    font-size: 16.5px;
    font-weight: 600;
    line-height: 22px;
    color: #f4f4f4;
}
.prop-title {
    padding-top: 15px;
    font-size: 15px;
    line-height: 20px;
    color: #ececec;
}
.prop-main { height: 90px; }
.title-frame { padding-top: 24px; }
.prop-transform { height: 159px; }
.ref-grid { margin: 28px 0 0 7px; }
.prop-flex { height: 64px; padding-top: 5px; }
.prop-look { height: 267px; }
.prop-align { height: 94px; }
.prop-wrap { height: 127px; }
.prop-fit { height: 124px; border-bottom: none; }
.look-row {
    display: flex;
    align-items: center;
    height: 43px;
    font-size: 15px;
}
.prop-title + .look-row {
    margin-top: 9px;
}
.look-ico {
    display: flex;
    flex: none;
    justify-content: center;
    width: 34px;
    margin-right: 14px;
}
.look-fill {
    width: 24px;
    height: 25px;
    background-color: #ffee00;
}
.ul {
    text-decoration: underline;
}
.prop-icons {
    display: flex;
    align-items: center;
    margin-top: 19px;
    padding-left: 7px;
}
.align-first { margin-left: 14px; }
.prop-wrap .prop-icons { margin-top: 15px; }
.prop-fit .prop-icons { margin-top: 18px; }
.panel-wrap {
    flex: none;
    width: 30px;
    height: 28px;
    margin-left: -5px;
    color: #e0e0e0;
}
.wrap-second { margin-left: 17px; }
.fit-second { margin-left: 16px; }
.auto {
    display: flex;
    align-items: center;
    margin: 23px 0 0 6px;
    font-size: 15px;
    color: #ececec;
}
.check {
    display: block;
    flex: none;
    width: 16px;
    height: 16px;
    margin-right: 9px;
    border: 1px solid #c8c8c8;
    border-radius: 3px;
}

/* dialog window */
.dialog {
    position: absolute;
    left: 436px;
    top: 49px;
    width: 726px;
    height: 732px;
    background-color: #535353;
    border-radius: 10px;
    box-shadow: 0 8px 30px rgba(0, 0, 0, 0.35);
    overflow: hidden;
}
.title-bar {
    position: relative;
    display: flex;
    align-items: center;
    gap: 8px;
    height: 29px;
    padding-left: 7px;
    background-color: #d9d9d9;
    border-bottom: 2px solid #414141;
}
.light {
    width: 12px;
    height: 12px;
    border-radius: 50%;
    background-color: #b4b4b4;
}
.light.red {
    background-color: #f4564e;
}
.title {
    position: absolute;
    left: 0;
    right: 0;
    text-align: center;
    font-size: 15.5px;
    color: #3c3c3c;
    line-height: 27px;
}
.dialog-body {
    padding: 22px 21px 0;
    font-size: 17px;
}
.query {
    display: flex;
    align-items: center;
    height: 30px;
}
.query-label {
    width: 76px;
    flex: none;
    color: #f0f0f0;
}
.combo {
    display: flex;
    align-items: stretch;
    height: 30px;
    background-color: #464646;
    border: 1px solid #6a6a6a;
    border-radius: 3px;
}
.combo-val {
    flex: 1;
    padding-left: 5px;
    line-height: 28px;
    color: #f4f4f4;
    white-space: nowrap;
}
.combo-btn {
    display: flex;
    align-items: center;
    justify-content: center;
    width: 25px;
    background-color: #535353;
    border-left: 1px solid #6a6a6a;
    color: #e8e8e8;
}
.combo-query {
    width: 414px;
}
.save {
    margin-left: 15px;
}
.query-trash {
    margin-left: 23px;
    color: #8a8a8a;
}
.tabs {
    position: relative;
    z-index: 1;
    display: flex;
    height: 29px;
    margin: 10px 0 0 155px;
    width: 374px;
    background-color: #535353;
    border: 1px solid #6a6a6a;
    border-radius: 2px;
}
.tab {
    text-align: center;
    line-height: 28px;
    color: #f0f0f0;
    border-right: 1px solid #6a6a6a;
}
.tab-text { width: 63px; }
.tab-grep { width: 68px; }
.tab-glyph { width: 85px; }
.tab-obj { width: 83px; }
.tab-color { flex: 1; border-right: none; }
.tab.active {
    background-color: #303030;
    color: #4ea1e6;
}
.group {
    display: flex;
    width: 684px;
    height: 542px;
    margin-top: -13px;
    padding: 42px 0 0 20px;
    border: 1px solid #5c5c5c;
}
.group-left {
    width: 470px;
    flex: none;
}
.field-label {
    height: 20px;
    line-height: 20px;
    color: #f0f0f0;
}
.field-row {
    display: flex;
    align-items: center;
    margin-top: 8px;
}
.combo-field {
    width: 350px;
    flex: none;
}
.combo.focus {
    background-color: #fff;
    border-color: #4c93dc;
    box-shadow: 0 0 0 1px #3d78b8;
}
.caret {
    display: block;
    width: 3px;
    height: 21px;
    margin-top: 3px;
    background-color: #1f6fe0;
}
.at {
    position: relative;
    display: flex;
    align-items: center;
    justify-content: center;
    width: 33px;
    height: 30px;
    margin-left: 8px;
    padding-right: 5px;
    border-radius: 3px;
    font-family: "Liberation Sans", Arial, sans-serif;
    font-size: 20px;
    color: #aeaeae;
}
.at::after {
    content: "";
    position: absolute;
    right: 4px;
    bottom: 7px;
    border-left: 4px solid #aeaeae;
    border-top: 3px solid transparent;
    border-bottom: 3px solid transparent;
}
.at-on {
    background-color: #2e2e2e;
    color: #d0d0d0;
}
.label-change {
    margin-top: 16px;
}
.label-change + .field-row {
    margin-top: 8px;
}
.scope {
    display: flex;
    align-items: center;
    height: 30px;
    margin-top: 11px;
}
.scope .field-label {
    width: 119px;
    flex: none;
}
.combo-scope {
    width: 340px;
    flex: none;
}
.combo-scope .combo-val {
    padding-left: 4px;
}
.scope-icons {
    display: flex;
    align-items: center;
    height: 30px;
    margin-top: 8px;
    padding-left: 6px;
}
.ico-a { margin-left: 0; }
.ico-b { margin-left: 20px; }
.ico-c { margin-left: 20px; }
.ico-d { margin-left: 18px; }
.scope-btn {
    width: 33px;
    height: 30px;
    margin-left: 15px;
}
.aa {
    font-family: "Liberation Sans", Arial, sans-serif;
    font-size: 11px;
    fill: #535353;
}
.label-fmt1 {
    margin-top: 16px;
}
.label-fmt2 {
    margin-top: 28px;
}
.fmt-row {
    display: flex;
    margin-top: 5px;
}
.fmt-box {
    width: 350px;
    height: 79px;
    flex: none;
    border: 1px solid #5e5e5e;
}
.fmt-tools {
    display: flex;
    flex-direction: column;
    align-items: center;
    width: 42px;
    padding-top: 5px;
    color: #c2c2c2;
}
.fmt-trash {
    margin-top: 25px;
    color: #8a8a8a;
}
.direction {
    position: relative;
    width: 152px;
    height: 200px;
    margin: -1px 0 0;
    padding: 0 0 0 18px;
    border: 1px solid #5c5c5c;
    flex: none;
}
.direction legend {
    padding: 0;
    margin-top: -1px;
    line-height: 20px;
    color: #f0f0f0;
}
.radio {
    display: flex;
    align-items: center;
    height: 36px;
    color: #f0f0f0;
}
.direction legend + .radio {
    margin-top: 9px;
}
.radio i {
    position: relative;
    width: 17px;
    height: 17px;
    margin: 0 8px 0 4px;
    border: 1.5px solid #c8c8c8;
    border-radius: 50%;
}
.radio.on i {
    background-color: #c8c8c8;
}
.radio.on i::after {
    content: "";
    position: absolute;
    left: 4.5px;
    top: 4.5px;
    width: 5px;
    height: 5px;
    border-radius: 50%;
    background-color: #5a5a5a;
}

/* macOS style menus, the backdrop blur gives the tinted edges */
.menu {
    position: absolute;
    z-index: 5;
    background-color: rgba(250, 244, 236, 0.78);
    -webkit-backdrop-filter: blur(14px);
    backdrop-filter: blur(14px);
    border-radius: 14px;
    box-shadow: 0 8px 24px rgba(0, 0, 0, 0.26), 0 0 0 1px rgba(255, 255, 255, 0.25) inset;
    font-family: Roboto, Arial, sans-serif;
    font-size: 19px;
    color: #222;
}
.main-menu {
    left: 872px;
    top: 306px;
    width: 328px;
    height: 475px;
    padding: 8.500px 7px 0;
}
.sub-menu {
    z-index: 6;
    left: 1194px;
    top: 573px;
    width: 253px;
    height: 156px;
    padding: 7px 7px 0;
    background-color: rgba(252, 246, 238, 0.86);
}
.mi {
    position: relative;
    display: flex;
    align-items: center;
    justify-content: space-between;
    height: 35.600px;
    padding: 0 17px 0 15px;
    border-radius: 8px;
    white-space: nowrap;
}
.mi svg {
    color: #2a2a2a;
}
.msep {
    height: 16.400px;
    margin: 0 16px 0 15px;
    padding-top: 7px;
}
.msep::before {
    content: "";
    display: block;
    height: 1px;
    background-color: rgba(0, 0, 0, 0.14);
}
.selected {
    background-color: #2a76df;
    color: #fff;
}
.selected svg {
    color: #fff;
}
.callout {
    position: absolute;
    left: 3px;
    top: -4px;
    width: 222px;
    height: 43px;
    border: 4px solid #ee9122;
    box-shadow: 0 1px 4px rgba(0, 0, 0, 0.25);
}
```
